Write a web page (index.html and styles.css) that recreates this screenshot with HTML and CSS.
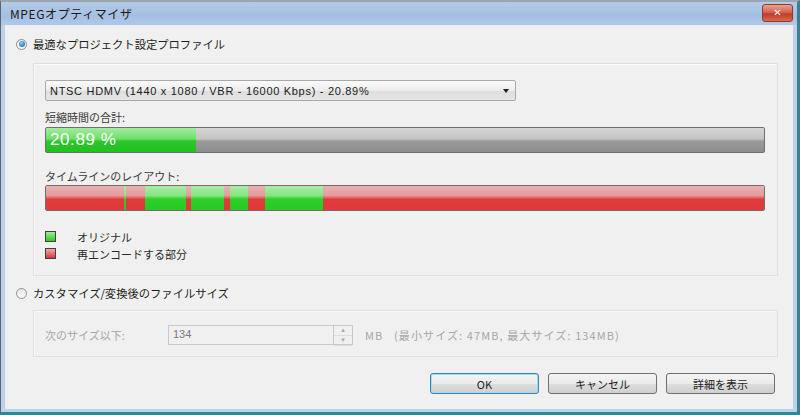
FILE: index.html
```html
<!DOCTYPE html>
<html lang="ja">
<head>
    <meta charset="UTF-8">
    <title>MPEGオプティマイザ</title>
    <link rel="stylesheet" href="styles.css">
</head>
<body>

    <div class="window">
        <!-- Title bar -->
        <div class="titlebar">
            <span class="title">MPEGオプティマイザ</span>
            <div class="close-btn">&#10005;</div>
        </div>

        <div class="client">
            <!-- Option 1 -->
            <div class="radio-row">
                <span class="radio checked"></span>
                <span>最適なプロジェクト設定プロファイル</span>
            </div>

            <div class="group">
                <div class="select">
                    <span>NTSC HDMV (1440 x 1080 / VBR - 16000 Kbps) - 20.89%</span>
                    <span class="arrow"></span>
                </div>

                <div class="label">短縮時間の合計:</div>
                <div class="progress">
                    <div class="progress-fill" style="width: 20.89%"></div>
                    <span class="progress-text">20.89 %</span>
                </div>

                <div class="label label-gap">タイムラインのレイアウト:</div>
                <div class="timeline">
                    <div class="seg red" style="flex: 78"></div>
                    <div class="seg green" style="flex: 2"></div>
                    <div class="seg red" style="flex: 19"></div>
                    <div class="seg green" style="flex: 41"></div>
                    <div class="seg red" style="flex: 5"></div>
                    <div class="seg green" style="flex: 33"></div>
                    <div class="seg red" style="flex: 6"></div>
                    <div class="seg green" style="flex: 19"></div>
                    <div class="seg red" style="flex: 17"></div>
                    <div class="seg green" style="flex: 58"></div>
                    <div class="seg red" style="flex: 442"></div>
                </div>

                <div class="legend">
                    <div class="legend-row">
                        <span class="swatch green"></span>
                        <span>オリジナル</span>
                    </div>
                    <div class="legend-row">
                        <span class="swatch red"></span>
                        <span>再エンコードする部分</span>
                    </div>
                </div>
            </div>

            <!-- Option 2 -->
            <div class="radio-row second">
                <span class="radio"></span>
                <span>カスタマイズ/変換後のファイルサイズ</span>
            </div>

            <div class="group disabled">
                <div class="size-row">
                    <span class="size-label">次のサイズ以下:</span>
                    <div class="spin">
                        <div class="spin-input">134</div>
                        <div class="spin-btns">
                            <span>&#9652;</span>
                            <span>&#9662;</span>
                        </div>
                    </div>
                    <span class="size-info">MB&nbsp;&nbsp;&nbsp;(最小サイズ: 47MB, 最大サイズ: 134MB)</span>
                </div>
            </div>

            <!-- Buttons -->
            <div class="buttons">
                <button class="btn default">OK</button>
                <button class="btn">キャンセル</button>
                <button class="btn">詳細を表示</button>
            </div>
        </div>
    </div>

</body>
</html>
```

FILE: styles.css
```css
body {
    margin: 0;
    padding: 0;
    font-family: "Noto Sans CJK JP", "Liberation Sans", sans-serif;
    font-size: 11px;
    color: #222;
}

.window {
    width: 800px;
    height: 415px;
    box-sizing: border-box;
    display: flex;
    flex-direction: column;
    background-color: #bcd2ec;
    border-top: 2px solid #9ea5ad;
    border-left: 1px solid #5c646c;
    border-right: 3px solid #3a8092;
    border-bottom: 3px solid #2e8a90;
    padding: 0 4px 3px 4px;
}

.titlebar {
    height: 23px;
    margin: 0 -4px;
    display: flex;
    align-items: flex-start;
    justify-content: space-between;
    background: linear-gradient(to bottom, #b3cbe9, #a4bfe2 60%, #b0c9e8);
}

.title {
    margin: 4px 0 0 9px;
    font-size: 12px;
    letter-spacing: 0.6px;
    line-height: 15px;
    color: #1a1a1a;
}

.close-btn {
    width: 29px;
    height: 16px;
    margin: 2px 4px 0 0;
    border: 1px solid #8e3b2d;
    border-radius: 3px;
    background: linear-gradient(to bottom, #e9a394, #d45a44 50%, #c0392a 55%, #d86a50);
    color: white;
    font-size: 10px;
    font-weight: bold;
    line-height: 16px;
    text-align: center;
    font-family: "DejaVu Sans", sans-serif;
}

.client {
    flex: 1;
    background-color: #f0f0f0;
    border-top: 1px solid #e8eef6;
    padding: 11px 15px 0 11px;
    display: flex;
    flex-direction: column;
}

.radio-row {
    display: flex;
    align-items: center;
    gap: 6px;
    height: 14px;
    font-size: 11.3px;
    color: #1c1c1c;
}

.radio-row.second {
    margin-top: 10px;
}

.radio {
    width: 9px;
    height: 9px;
    border: 1px solid #8c9096;
    border-radius: 50%;
    background: linear-gradient(to bottom, #e8e8e8, #fafafa);
    display: flex;
    align-items: center;
    justify-content: center;
}

.radio.checked::after {
    content: "";
    width: 6px;
    height: 6px;
    border-radius: 50%;
    background: radial-gradient(circle at 40% 35%, #8fd0f5, #1f7fc0 70%, #155c92);
}

.group {
    margin: 12px 0 0 17px;
    padding: 16px 12px 13px 11px;
    border: 1px solid #e0e0e0;
    box-shadow: inset 1px 1px 0 #f9f9f9;
}

.select {
    width: 465px;
    height: 19px;
    border: 1px solid #a9a9a9;
    border-radius: 2px;
    background: linear-gradient(to bottom, #fbfbfb, #ececec 50%, #dedede 55%, #e6e6e6);
    display: flex;
    align-items: center;
    justify-content: space-between;
    padding: 0 0 0 4px;
    font-family: "Liberation Sans", sans-serif;
    font-size: 11px;
    letter-spacing: 0.7px;
    color: #202020;
}

.arrow {
    width: 0;
    height: 0;
    margin-right: 6px;
    border-left: 3px solid transparent;
    border-right: 3px solid transparent;
    border-top: 4px solid #202020;
}

.label {
    margin-top: 9px;
    line-height: 14px;
    color: #3a3a3a;
}

.label-gap {
    margin-top: 16px;
}

.progress {
    position: relative;
    margin-top: 3px;
    height: 24px;
    border: 1px solid #6f6f6f;
    border-radius: 2px;
    background: linear-gradient(to bottom, #d6d6d6, #c4c4c4 45%, #9a9a9a 55%, #8d8d8d);
    overflow: hidden;
}

.progress-fill {
    height: 100%;
    background: linear-gradient(to bottom, #a2ec9e, #6ee06a 45%, #2cc62a 55%, #22c020);
}

.progress-text {
    position: absolute;
    left: 4px;
    top: 2px;
    font-family: "Liberation Sans", sans-serif;
    font-size: 17px;
    letter-spacing: 0.6px;
    line-height: 20px;
    color: white;
}

.timeline {
    margin-top: 2px;
    height: 24px;
    display: flex;
    border: 1px solid #7a6a6a;
    border-radius: 2px;
    overflow: hidden;
}

.seg.red {
    background: linear-gradient(to bottom, #eab2b2, #e49a9a 40%, #e03c3e 55%, #dd3a3b);
}

.seg.green {
    background: linear-gradient(to bottom, #a8eea6, #86e482 40%, #2cd028 55%, #2ac826);
}

.legend {
    margin-top: 17px;
}

.legend-row {
    display: flex;
    align-items: center;
    height: 17px;
    gap: 21px;
    color: #2a2a2a;
}

.swatch {
    width: 9px;
    height: 9px;
    border: 1px solid #404040;
    margin-top: -1px;
}

.swatch.green {
    background: linear-gradient(to bottom, #9bee98, #2fc62c);
}

.swatch.red {
    background: linear-gradient(to bottom, #f0aaaa, #d83838);
}

.group.disabled {
    margin-top: 10px;
    padding: 14px 12px 11px 11px;
    color: #a6a6a6;
}

.size-row {
    display: flex;
    align-items: center;
    height: 20px;
}

.size-label {
    width: 123px;
}

.spin {
    display: flex;
    height: 20px;
}

.spin-input {
    width: 166px;
    box-sizing: border-box;
    border: 1px solid #c9c9c9;
    background-color: #f0f0f0;
    padding: 2px 4px;
    font-family: "Liberation Sans", sans-serif;
    font-size: 11px;
    color: #7a7a7a;
}

.spin-btns {
    width: 19px;
    display: flex;
    flex-direction: column;
    border: 1px solid #c9c9c9;
    border-left: none;
    box-sizing: border-box;
}

.spin-btns span {
    flex: 1;
    font-size: 7px;
    line-height: 9px;
    text-align: center;
    color: #a8a8a8;
    border-bottom: 1px solid #dedede;
    font-family: "DejaVu Sans", sans-serif;
}

.size-info {
    margin-left: 12px;
    letter-spacing: 1.1px;
}

.buttons {
    display: flex;
    justify-content: flex-end;
    gap: 9px;
    margin: 16px 3px 0 0;
}

.btn {
    width: 109px;
    height: 21px;
    border: 1px solid #707070;
    border-radius: 3px;
    background: linear-gradient(to bottom, #f4f4f4, #ebebeb 50%, #dddddd 55%, #cfcfcf);
    font-family: "Noto Sans CJK JP", "Liberation Sans", sans-serif;
    font-size: 11px;
    color: #1c1c1c;
    padding: 0;
}

.btn.default {
    border-color: #3c7fb1;
    box-shadow: inset 0 0 0 1px #9fdcf5;
}
```
